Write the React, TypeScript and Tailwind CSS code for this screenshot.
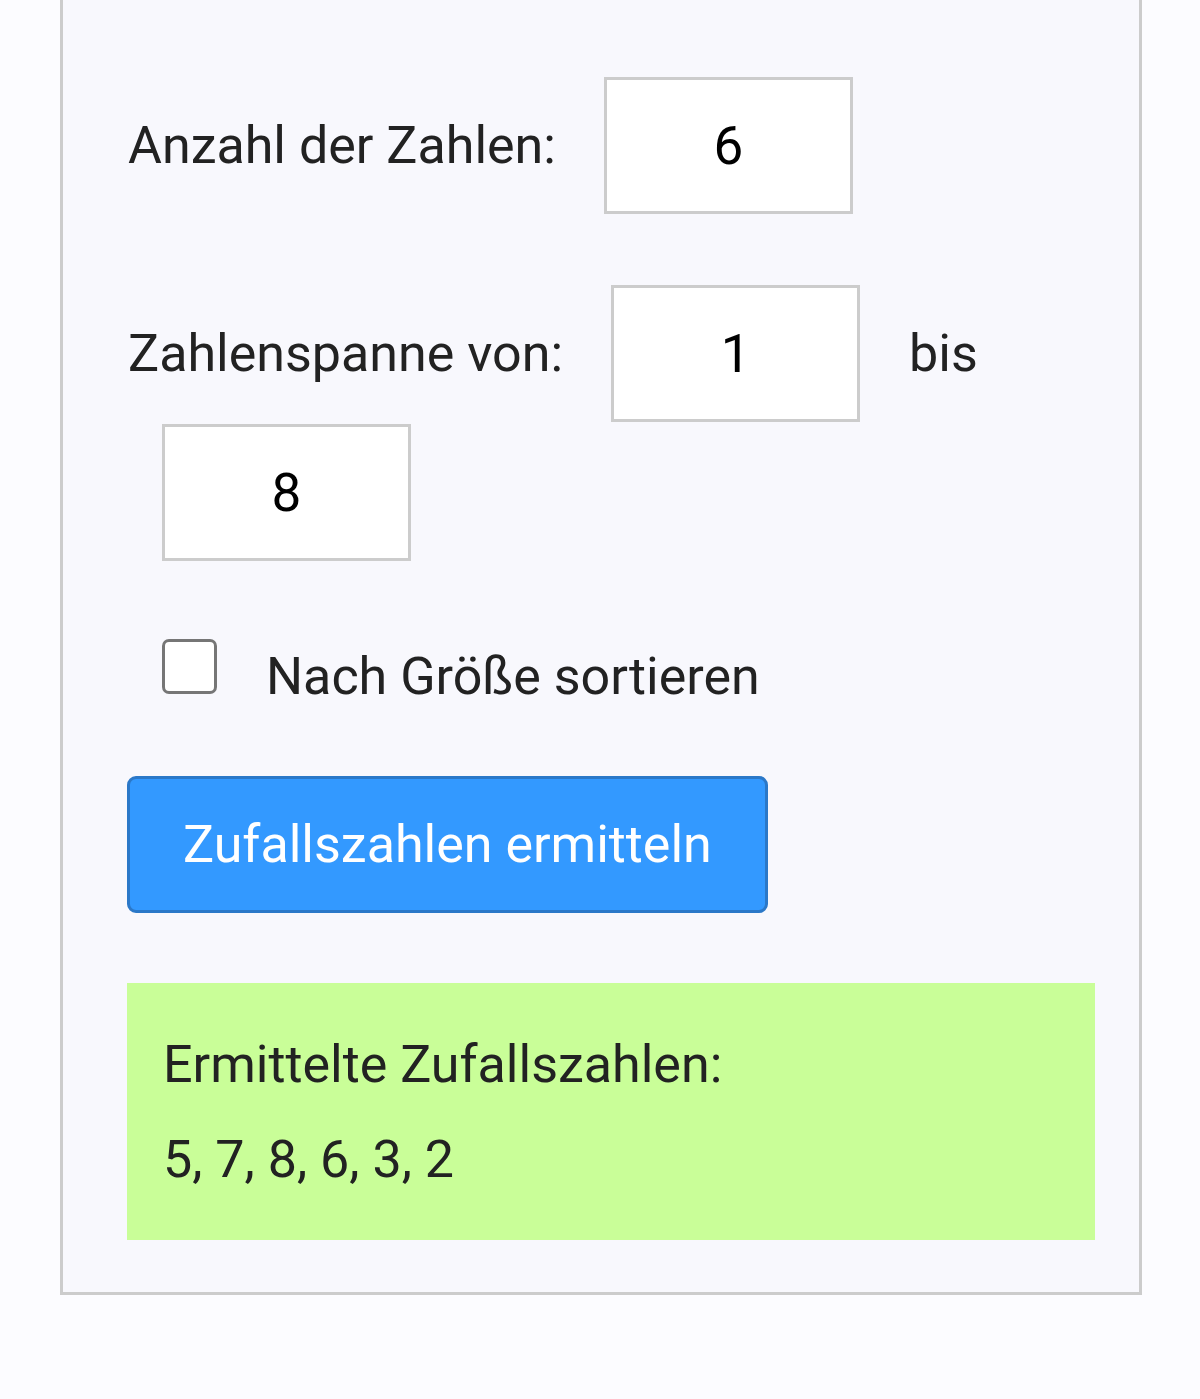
export default function App() {
  return (
    <div
      className="min-h-[1399px] bg-[#fcfcff] text-[#222222]"
      style={{ fontFamily: "Roboto, 'Liberation Sans', sans-serif" }}
    >
      <div className="ml-[60px] w-[1082px] border-x-[3px] border-b-[3px] border-[#cccccc] bg-[#f8f8fd] pl-[64px] pr-[43px] pt-[77px] pb-[52px]">
        <div className="flex items-center">
          <label className="ml-px text-[52px] leading-[54px]">Anzahl der Zahlen:</label>
          <input
            type="text"
            defaultValue="6"
            className="ml-[48px] h-[137px] w-[249px] border-[3px] border-[#cccccc] bg-white text-center text-[53px] text-black outline-none"
          />
        </div>

        <div className="mt-[71px] flex flex-wrap items-center gap-y-[2px]">
          <label className="ml-px text-[52px] leading-[54px]">Zahlenspanne von:</label>
          <input
            type="text"
            defaultValue="1"
            className="ml-[48px] h-[137px] w-[249px] border-[3px] border-[#cccccc] bg-white text-center text-[53px] text-black outline-none"
          />
          <span className="ml-[49px] text-[52px] leading-[54px]">bis</span>
          <input
            type="text"
            defaultValue="8"
            className="ml-[35px] h-[137px] w-[249px] border-[3px] border-[#cccccc] bg-white text-center text-[53px] text-black outline-none"
          />
        </div>

        <div className="mt-[78px] flex items-start">
          <span className="ml-[35px] h-[55px] w-[55px] rounded-[7px] border-[3px] border-[#767676] bg-white" />
          <span className="ml-[49px] mt-[11px] text-[52px] leading-[54px]">Nach Größe sortieren</span>
        </div>

        <button className="mt-[72px] flex h-[137px] w-[641px] items-center rounded-[9px] border-[3px] border-[#2b78c8] bg-[#3399ff] pl-[53px] text-[52px] leading-[54px] text-white">
          Zufallszahlen ermitteln
        </button>

        <div className="mt-[70px] h-[257px] w-[968px] bg-[#c9fe98] pl-[36px] pt-[55px]">
          <p className="text-[52px] leading-[54px]">Ermittelte Zufallszahlen:</p>
          <p className="mt-[41px] text-[52px] leading-[54px]">5, 7, 8, 6, 3, 2</p>
        </div>
      </div>
    </div>
  )
}
